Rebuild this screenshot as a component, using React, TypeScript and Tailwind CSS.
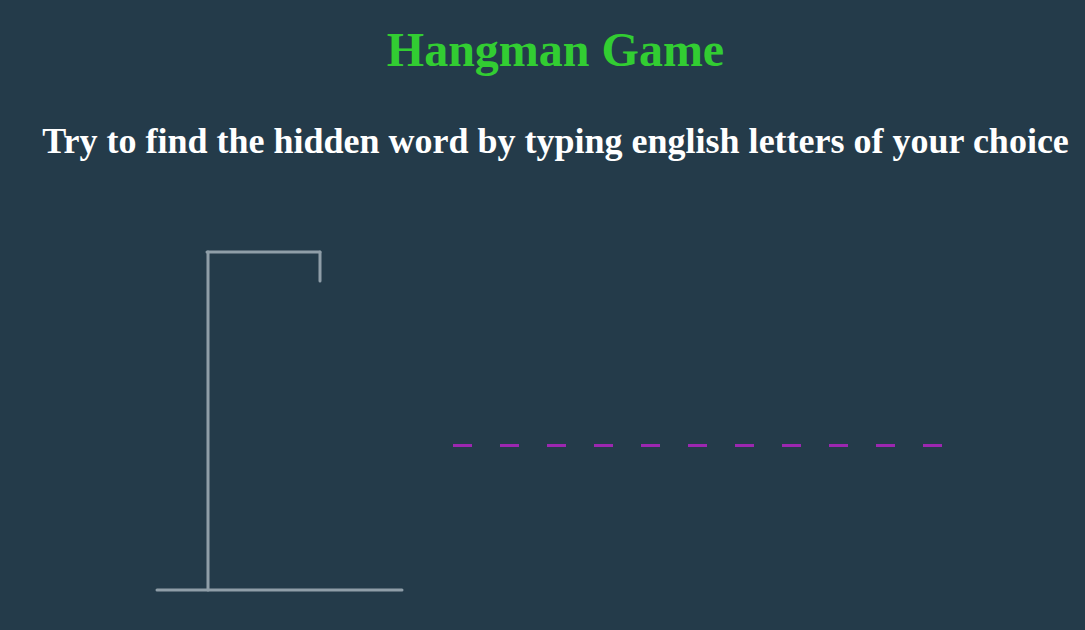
const word = Array.from({ length: 11 });

const Gallows = () => {
  return (
    <svg width="260" height="350" viewBox="0 0 260 350" className="shrink-0">
      <g stroke="#8f9ea8" strokeWidth="3" strokeLinecap="round" fill="none">
        <line x1="58" y1="6" x2="58" y2="344" />
        <line x1="57" y1="6" x2="170" y2="6" />
        <line x1="170" y1="6" x2="170" y2="35" />
        <line x1="7" y1="344" x2="252" y2="344" />
      </g>
    </svg>
  );
};

export default function App() {
  return (
    <div className="min-h-[630px] w-full bg-[#243b4a] pl-[26px] font-['Liberation_Serif',serif] text-center">
      <h1 className="pt-[23px] text-[48px] leading-[53px] font-bold text-[#32cd32]">
        Hangman Game
      </h1>
      <p className="mt-[45px] text-[36px] leading-[41px] font-bold text-white">
        Try to find the hidden word by typing english letters of your choice
      </p>
      <div className="flex mt-[84px] pl-[124px]">
        <Gallows />
        <div className="flex gap-[28px] mt-[198px] ml-[43px]">
          {word.map((_, i) => (
            <span key={i} className="block w-[19px] h-[3px] bg-[#9c27b0]" />
          ))}
        </div>
      </div>
    </div>
  );
}
